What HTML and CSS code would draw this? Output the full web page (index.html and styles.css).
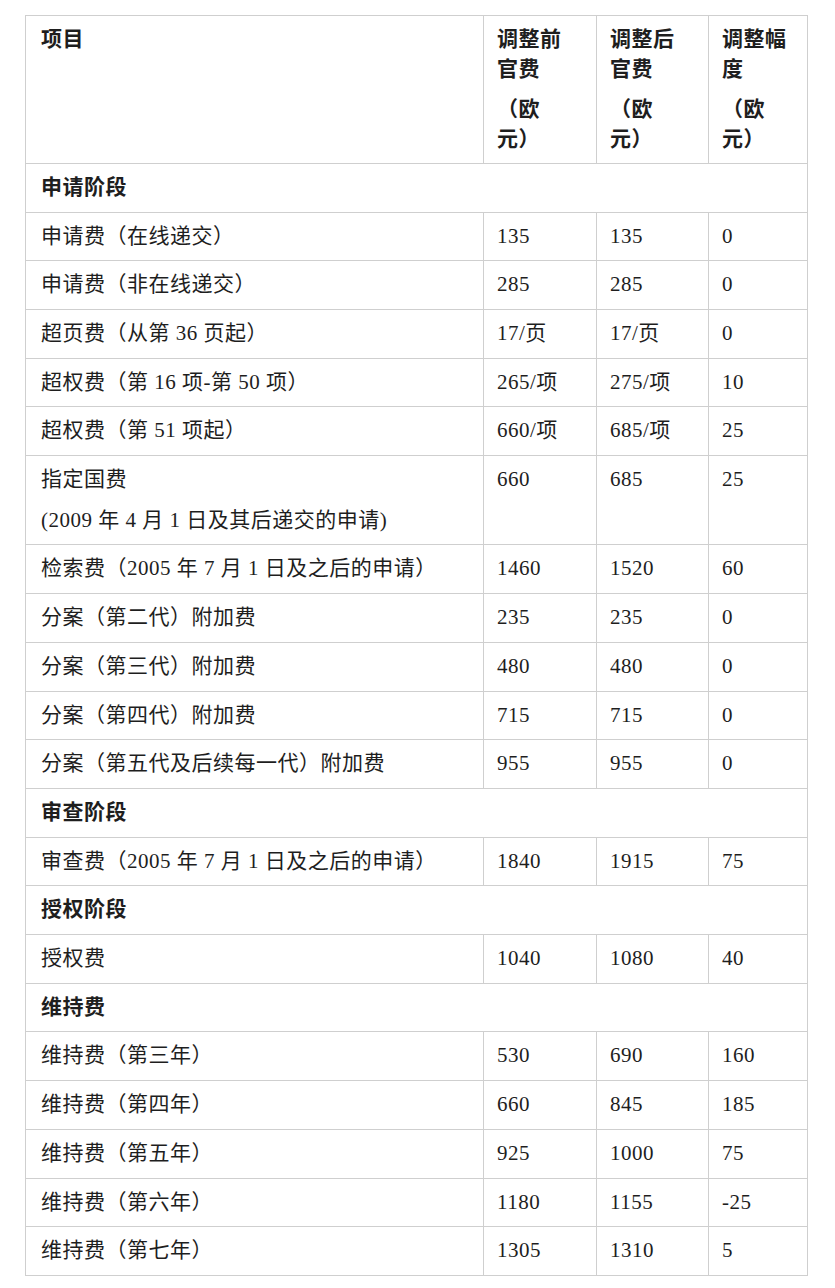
FILE: index.html
```html
<!DOCTYPE html>
<html lang="zh-CN">
<head>
<meta charset="utf-8">
<title>官费调整表</title>
<link rel="stylesheet" href="styles.css">
</head>
<body>
<table class="fees">
  <colgroup>
    <col class="c-item">
    <col class="c-num">
    <col class="c-num2">
    <col class="c-diff">
  </colgroup>
  <thead>
    <tr class="head">
      <th>项目</th>
      <th class="num"><p>调整前<br>官费</p><p class="unit">（欧<br>元）</p></th>
      <th class="num"><p>调整后<br>官费</p><p class="unit">（欧<br>元）</p></th>
      <th class="num"><p>调整幅<br>度</p><p class="unit">（欧<br>元）</p></th>
    </tr>
  </thead>
  <tbody>
    <tr class="section"><td colspan="4">申请阶段</td></tr>
    <tr><td>申请费（在线递交）</td><td class="num">135</td><td class="num">135</td><td class="num">0</td></tr>
    <tr><td>申请费（非在线递交）</td><td class="num">285</td><td class="num">285</td><td class="num">0</td></tr>
    <tr><td>超页费（从第 36 页起）</td><td class="num">17/页</td><td class="num">17/页</td><td class="num">0</td></tr>
    <tr><td>超权费（第 16 项-第 50 项）</td><td class="num">265/项</td><td class="num">275/项</td><td class="num">10</td></tr>
    <tr><td>超权费（第 51 项起）</td><td class="num">660/项</td><td class="num">685/项</td><td class="num">25</td></tr>
    <tr><td><p>指定国费</p><p class="sub">(2009 年 4 月 1 日及其后递交的申请)</p></td><td class="num">660</td><td class="num">685</td><td class="num">25</td></tr>
    <tr><td>检索费（2005 年 7 月 1 日及之后的申请）</td><td class="num">1460</td><td class="num">1520</td><td class="num">60</td></tr>
    <tr><td>分案（第二代）附加费</td><td class="num">235</td><td class="num">235</td><td class="num">0</td></tr>
    <tr><td>分案（第三代）附加费</td><td class="num">480</td><td class="num">480</td><td class="num">0</td></tr>
    <tr><td>分案（第四代）附加费</td><td class="num">715</td><td class="num">715</td><td class="num">0</td></tr>
    <tr><td>分案（第五代及后续每一代）附加费</td><td class="num">955</td><td class="num">955</td><td class="num">0</td></tr>
    <tr class="section"><td colspan="4">审查阶段</td></tr>
    <tr><td>审查费（2005 年 7 月 1 日及之后的申请）</td><td class="num">1840</td><td class="num">1915</td><td class="num">75</td></tr>
    <tr class="section"><td colspan="4">授权阶段</td></tr>
    <tr><td>授权费</td><td class="num">1040</td><td class="num">1080</td><td class="num">40</td></tr>
    <tr class="section"><td colspan="4">维持费</td></tr>
    <tr><td>维持费（第三年）</td><td class="num">530</td><td class="num">690</td><td class="num">160</td></tr>
    <tr><td>维持费（第四年）</td><td class="num">660</td><td class="num">845</td><td class="num">185</td></tr>
    <tr><td>维持费（第五年）</td><td class="num">925</td><td class="num">1000</td><td class="num">75</td></tr>
    <tr><td>维持费（第六年）</td><td class="num">1180</td><td class="num">1155</td><td class="num">-25</td></tr>
    <tr><td>维持费（第七年）</td><td class="num">1305</td><td class="num">1310</td><td class="num">5</td></tr>
  </tbody>
</table>
</body>
</html>
```

FILE: styles.css
```css
html, body {
  margin: 0;
  padding: 0;
  background: #ffffff;
}

body {
  padding: 15px 0 0 25px;
  font-family: "Liberation Serif", "Noto Sans CJK SC", serif;
  font-size: 21px;
  letter-spacing: 0.5px;
  color: #1e1e1e;
}

.fees {
  border-collapse: collapse;
  table-layout: fixed;
  width: 782px;
}

.c-item { width: 458px; }
.c-num { width: 113px; }
.c-num2 { width: 112px; }
.c-diff { width: 99px; }

.fees th,
.fees td {
  border: 1px solid #cfcfcf;
  padding: 9px 12px 9px 15px;
  line-height: 29.7px;
  text-align: left;
  vertical-align: top;
  font-weight: normal;
}

.fees .num {
  padding-left: 13px;
}

.fees p {
  margin: 0;
}

.fees .unit,
.fees .sub {
  margin-top: 11px;
}

.head th {
  font-weight: bold;
  padding-bottom: 8px;
}

.section td {
  font-weight: bold;
}
```
